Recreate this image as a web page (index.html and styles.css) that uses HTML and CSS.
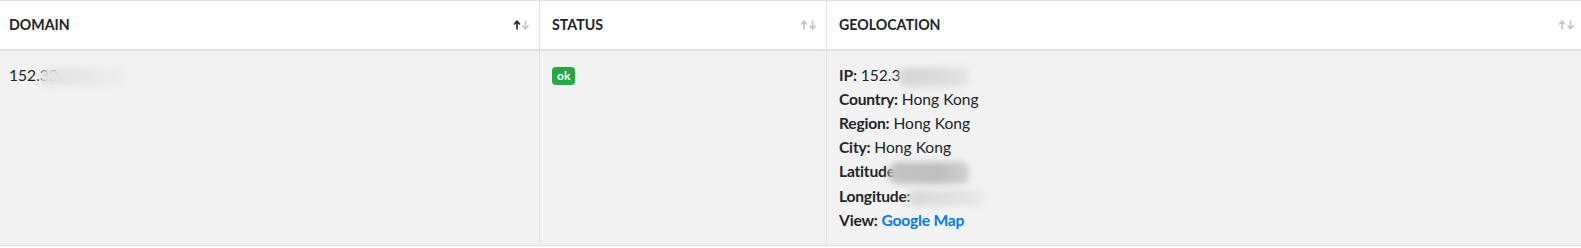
FILE: index.html
```html
<!DOCTYPE html>
<html>
<head>
<meta charset="utf-8">
<link rel="stylesheet" href="styles.css">
</head>
<body>
<table class="grid">
  <colgroup>
    <col class="c-domain">
    <col class="c-status">
    <col class="c-geo">
  </colgroup>
  <thead>
    <tr>
      <th><div class="th-in"><span>DOMAIN</span>
        <svg class="sort" width="17" height="10" viewBox="0 0 17 10"><path d="M4 9.5V1.5M1 4.5L4 1.2L7 4.5" stroke="#212529" stroke-width="1.6" fill="none"/><path d="M12.5 0.5V8.5M9.5 5.5L12.5 8.8L15.5 5.5" stroke="#c2c2c2" stroke-width="1.6" fill="none"/></svg></div></th>
      <th><div class="th-in"><span>STATUS</span>
        <svg class="sort" width="17" height="10" viewBox="0 0 17 10"><path d="M4 9.5V1.5M1 4.5L4 1.2L7 4.5" stroke="#c2c2c2" stroke-width="1.6" fill="none"/><path d="M12.5 0.5V8.5M9.5 5.5L12.5 8.8L15.5 5.5" stroke="#c2c2c2" stroke-width="1.6" fill="none"/></svg></div></th>
      <th><div class="th-in"><span>GEOLOCATION</span>
        <svg class="sort" width="17" height="10" viewBox="0 0 17 10"><path d="M4 9.5V1.5M1 4.5L4 1.2L7 4.5" stroke="#c2c2c2" stroke-width="1.6" fill="none"/><path d="M12.5 0.5V8.5M9.5 5.5L12.5 8.8L15.5 5.5" stroke="#c2c2c2" stroke-width="1.6" fill="none"/></svg></div></th>
    </tr>
  </thead>
  <tbody>
    <tr>
      <td>152.32<span class="blur blur-domain"></span></td>
      <td><span class="badge">ok</span></td>
      <td>
        <div><b>IP:</b> 152.3<span class="blur blur-ip"></span></div>
        <div><b>Country:</b> Hong Kong</div>
        <div><b>Region:</b> Hong Kong</div>
        <div><b>City:</b> Hong Kong</div>
        <div><b>Latitude</b><span class="blur blur-lat"></span></div>
        <div><b>Longitude:</b><span class="blur blur-lon"></span></div>
        <div><b>View:</b> <a href="#">Google Map</a></div>
      </td>
    </tr>
  </tbody>
</table>
</body>
</html>
```

FILE: styles.css
```css
html, body {
  margin: 0;
  padding: 0;
  background: #fff;
}
body {
  font-family: Lato, "Noto Sans", sans-serif;
  font-size: 15.6px;
  line-height: 24px;
  color: #212529;
  overflow: hidden;
}
.grid {
  border-collapse: collapse;
  table-layout: fixed;
  width: 1588px;
  margin-left: -4px;
}
.c-domain { width: 543px; }
.c-status { width: 287px; }
.c-geo { width: 758px; }
.grid th, .grid td {
  border: 1px solid #dee2e6;
  padding: 12px;
  text-align: left;
  vertical-align: top;
}
.grid th {
  font-weight: 700;
  font-size: 14.2px;
  border-bottom: 2px solid #dee2e6;
  background: #fff;
  padding-right: 9px;
}
.grid td {
  background: #f2f2f2;
  padding-bottom: 13px;
}
.th-in {
  display: flex;
  justify-content: space-between;
  align-items: center;
}
.sort {
  display: block;
}
b { font-weight: 700; letter-spacing: -0.2px; }
a {
  color: #007bff;
  font-weight: 700;
  letter-spacing: -0.2px;
  text-decoration: none;
}
.badge {
  display: inline-block;
  background: #28a745;
  color: #fff;
  font-size: 12px;
  font-weight: 700;
  line-height: 1;
  padding: 3px 5px;
  border-radius: 4px;
  vertical-align: 1px;
}
.blur {
  display: inline-block;
  vertical-align: middle;
  filter: blur(3px);
  border-radius: 8px;
}
.blur-domain {
  width: 92px;
  height: 18px;
  background: linear-gradient(90deg, #e2e2e2, #e6e6e6 40%, #ececec 80%, #f2f2f2);
  margin-left: -18px;
}
.blur-ip {
  width: 70px;
  height: 20px;
  background: linear-gradient(90deg, #d6d6d6, #dadada 50%, #e4e4e4);
  margin-left: -2px;
}
.blur-lat {
  width: 80px;
  height: 22px;
  background: linear-gradient(90deg, #c4c4c4, #bdbdbd 60%, #d0d0d0);
  margin-left: -6px;
}
.blur-lon {
  width: 76px;
  height: 16px;
  background: linear-gradient(90deg, #d6d6d6, #e8e8e8);
  margin-left: -2px;
}
```
